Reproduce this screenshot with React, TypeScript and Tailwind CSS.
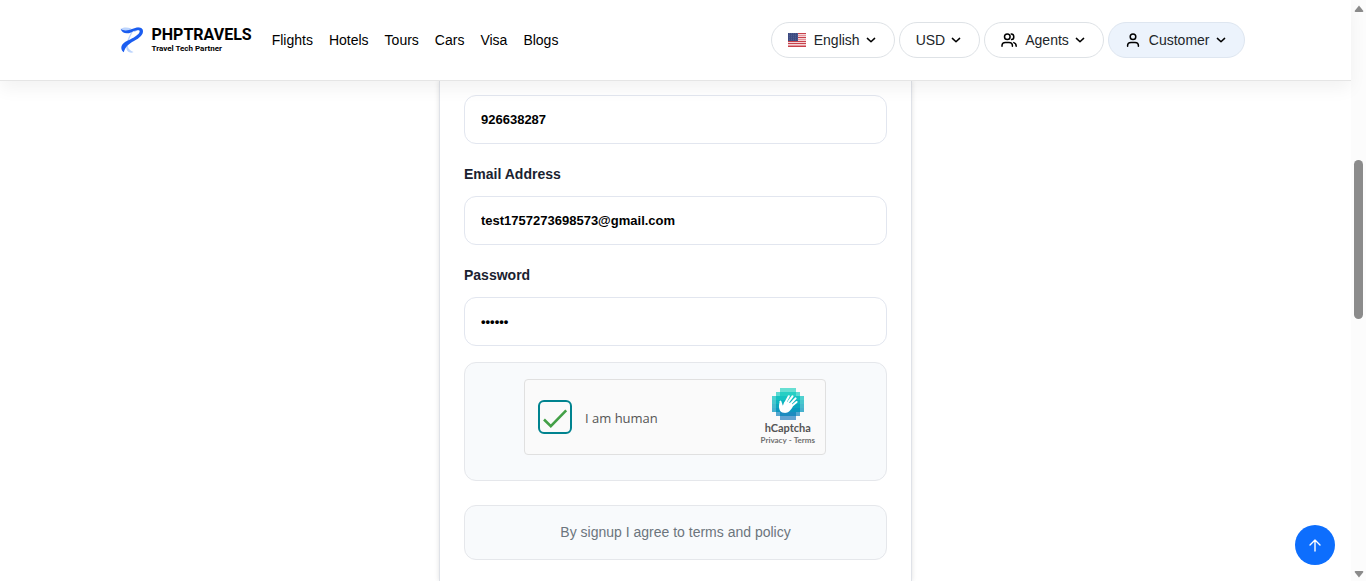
import type { ReactNode } from "react";

const LINKS = ["Flights", "Hotels", "Tours", "Cars", "Visa", "Blogs"];

function Chevron() {
  return (
    <svg width="10" height="10" viewBox="0 0 10 10" fill="none" stroke="#000" strokeWidth="1.5" strokeLinecap="round" strokeLinejoin="round" aria-hidden="true">
      <path d="M1.4 3.4 L5 6.7 L8.6 3.4" />
    </svg>
  );
}

function Flag() {
  return (
    <svg width="18" height="14" viewBox="0 0 18 14" className="mr-2" aria-hidden="true">
      <rect width="18" height="14" fill="#f3d3d6" />
      {[0, 4, 8, 10, 13].map((y) => (
        <rect key={y} y={y} width="18" height="1" fill="#c8414b" />
      ))}
      {[2, 6, 12].map((y) => (
        <rect key={y} y={y} width="18" height="1" fill="#e3949a" />
      ))}
      <rect width="10" height="8" fill="#3c4a80" />
      {[1, 3, 5, 7].map((y) =>
        [1, 3, 5, 7, 9].map((x) => <rect key={`${x}-${y}`} x={x} y={y - 0.5} width="0.7" height="0.7" fill="#6f7bab" />)
      )}
    </svg>
  );
}

function UserIcon() {
  return (
    <svg width="16" height="16" viewBox="0 0 16 16" className="mr-2" fill="none" stroke="#000" strokeWidth="1.5" strokeLinecap="round" aria-hidden="true">
      <circle cx="8" cy="4.8" r="2.8" />
      <path d="M2.6 14.2 V13.6 C2.6 11.6 4 10.4 6 10.4 H10 C12 10.4 13.4 11.6 13.4 13.6 V14.2" />
    </svg>
  );
}

function UsersIcon() {
  return (
    <svg width="16" height="16" viewBox="0 0 16 16" className="mr-2" fill="none" stroke="#000" strokeWidth="1.5" strokeLinecap="round" aria-hidden="true">
      <circle cx="6.3" cy="4.8" r="2.8" />
      <path d="M1 14.2 V13.6 C1 11.6 2.4 10.4 4.4 10.4 H8 C10 10.4 11.4 11.6 11.4 13.6 V14.2" />
      <path d="M10.2 2 C13.6 2 13.6 7.4 10.6 7.6" />
      <path d="M12.8 10.6 C14.4 11.2 15.2 12.4 15.2 14.2" />
    </svg>
  );
}

function Logo() {
  return (
    <a href="#" className="flex items-center gap-2 text-black">
      <svg width="24" height="28" viewBox="0 0 24 28" fill="none" aria-hidden="true">
        <path d="M1 2.6 C4 0.8 8 1.2 11.5 2.6 L9 4.8 C6 5.2 3 4.6 1 2.6Z" fill="#bcd4fd" />
        <path d="M14.5 3 C12.2 6.5 9.6 11.5 8.2 16.5 C7 21 8.4 24 13.6 26 C12.4 26.8 9.6 27 8 25.6 C5.6 23.4 6 18.6 7.4 14.6 C8.8 10.4 11 6 13 3.2Z" fill="#bcd4fd" />
        <path d="M15 3.4 C18 0.4 22.4 1.4 23 4.6 C20.4 2.8 17.4 4.4 14 6Z" fill="#8fb5fb" />
        <path d="M0.6 2.8 C4 5.4 8.4 4.6 12 3 C16.5 0.9 21.5 0.6 22.8 4 C24 8.4 19.6 12 14 15 C8.6 18 5.4 20.6 3.8 26.2 C1.2 24.6 0.6 21.4 2.2 18.8 C4.2 15.8 9 14.2 13.4 11.8 C17.6 9.4 20.6 6.4 19.4 4.6 C18 3.2 14.6 4.8 11 6.4 C7 8.2 1.8 7.6 0.6 2.8Z" fill="#1b5df0" />
      </svg>
      <span className="flex flex-col font-['Roboto',sans-serif] font-bold">
        <span className="text-base leading-[18px]">PHPTRAVELS</span>
        <span className="text-[8px] leading-[10px]">Travel Tech Partner</span>
      </span>
    </a>
  );
}

function Pill({ children, label, active }: { children?: ReactNode; label: string; active?: boolean }) {
  return (
    <button
      type="button"
      className={
        active
          ? "flex h-9 items-center rounded-full border border-[#dee6f0] bg-[#ecf3fc] px-4 text-[#212529]"
          : "flex h-9 items-center rounded-full border border-[#dee2e6] bg-white px-4 text-[#212529]"
      }
    >
      {children}
      <span className="mr-1.5">{label}</span>
      <Chevron />
      <span className="w-0.5" />
    </button>
  );
}

const inputClass =
  "block h-[49px] w-full rounded-xl border border-[#e2e6ef] bg-white px-4 text-[13px] font-bold text-black outline-none";
const labelClass = "mt-5 mb-3 block text-sm leading-5 font-bold text-[#1a2230]";

const HCAPTCHA_ROWS = [
  { from: 2, to: 5, color: "#35d6c6" },
  { from: 1, to: 6, color: "#26cfc4" },
  { from: 0, to: 7, color: "#16c3c2" },
  { from: 0, to: 7, color: "#0db5bf" },
  { from: 0, to: 7, color: "#0ba6be" },
  { from: 0, to: 7, color: "#0b98bf" },
  { from: 1, to: 6, color: "#1c8bc0" },
  { from: 2, to: 5, color: "#2f86c4" },
];

function HCaptchaLogo() {
  return (
    <svg width="32" height="32" viewBox="0 0 32 32" shapeRendering="auto" aria-hidden="true">
      {HCAPTCHA_ROWS.map((row, y) =>
        Array.from({ length: row.to - row.from + 1 }, (_, i) => {
          const x = row.from + i;
          const edge = x === row.from || x === row.to || y === 0 || y === 7;
          return <rect key={`${x}-${y}`} x={x * 4} y={y * 4} width="4" height="4" fill={row.color} opacity={edge ? 0.75 : 1} />;
        })
      )}
      <g stroke="#fff" strokeLinecap="round" strokeWidth="2" fill="none">
        <path d="M12.6 16 L16.8 8.2" />
        <path d="M14.5 16.5 L20.6 8.2" />
        <path d="M17 17.5 L23.6 10.4" />
        <path d="M18 19.5 L24.6 14" />
        <path d="M10.4 19.5 L8.4 13.6" />
      </g>
      <path d="M7.5 14.4 L10.6 18 L13 13.6 L20 15.4 L20.6 19 C18.6 22.6 15.8 25.4 11.8 24.8 C7.2 24 6.2 19.6 7.5 14.4Z" fill="#fff" />
    </svg>
  );
}

function HCaptcha() {
  return (
    <div className="flex w-[302px] items-center rounded border border-[#e0e0e0] bg-[#fafafa] pl-[13px]">
      <span className="relative h-[34px] w-[34px]">
        <input
          id="human"
          type="checkbox"
          defaultChecked
          className="block h-[34px] w-[34px] appearance-none rounded-md border-2 border-[#00838f] bg-[#fafafa]"
        />
        <svg width="34" height="34" viewBox="0 0 34 34" fill="none" stroke="#43a047" strokeWidth="2.6" className="pointer-events-none absolute top-0 left-0" aria-hidden="true">
          <path d="M6 19.5 L12.8 26.2 L28.2 10.4" />
        </svg>
      </span>
      <label htmlFor="human" className="ml-[13px] pt-0.5 font-['Open_Sans',sans-serif] text-[13px] text-[#555]">
        I am human
      </label>
      <div className="mr-[10px] ml-auto flex h-[74px] flex-col items-center pt-2 font-['Lato',sans-serif] text-[#555]">
        <HCaptchaLogo />
        <a href="#" className="mt-0.5 text-[11px] leading-3 font-bold">hCaptcha</a>
        <span className="flex gap-0.5 text-[8px] leading-3 font-bold text-[#707070]">
          <a href="#">Privacy</a>
          <span>-</span>
          <a href="#">Terms</a>
        </span>
      </div>
    </div>
  );
}

function Scrollbar() {
  return (
    <div className="flex w-[15px] shrink-0 flex-col items-center bg-[#fcfcfc] text-[#8b8b8b]" aria-hidden="true">
      <svg width="10" height="8" viewBox="0 0 10 8" className="mt-[5px]">
        <path d="M5 0.4 L9.4 6 Q9.4 7 8.4 7 H1.6 Q0.6 7 0.6 6Z" fill="currentColor" />
      </svg>
      <div className="mt-[147px] h-[159px] w-[9px] rounded-full bg-[#8b8b8b]" />
      <svg width="10" height="8" viewBox="0 0 10 8" className="mt-auto mb-[3px]">
        <path d="M5 7.6 L9.4 2 Q9.4 1 8.4 1 H1.6 Q0.6 1 0.6 2Z" fill="currentColor" />
      </svg>
    </div>
  );
}

export default function App() {
  return (
    <div className="flex min-h-screen bg-white font-['Liberation_Sans',Arial,sans-serif] text-sm">
      <div className="flex min-w-0 grow flex-col">
        <header className="z-10 border-b border-[#e5e5e5] bg-white shadow-[0_8px_16px_rgba(0,0,0,0.05)]">
          <div className="mx-auto flex h-20 max-w-[1140px] items-center pr-px pl-[14px]">
            <Logo />
            <nav className="ml-5 flex gap-4 text-black">
              {LINKS.map((link) => (
                <a key={link} href="#">{link}</a>
              ))}
            </nav>
            <div className="ml-auto flex gap-1">
              <Pill label="English"><Flag /></Pill>
              <Pill label="USD" />
              <Pill label="Agents"><UsersIcon /></Pill>
              <Pill label="Customer" active><UserIcon /></Pill>
            </div>
          </div>
        </header>
        <main className="flex grow justify-center">
          <form className="w-[473px] border-x border-[#dfe2e8] px-6 pt-[14px] shadow-[0_0_5px_rgba(0,0,0,0.12)]">
            <input type="text" aria-label="Phone" defaultValue="926638287" className={inputClass} />
            <label htmlFor="email" className={labelClass}>Email Address</label>
            <input id="email" type="email" defaultValue="test1757273698573@gmail.com" className={inputClass} />
            <label htmlFor="password" className={labelClass}>Password</label>
            <input id="password" type="password" defaultValue="secret" className={inputClass} />
            <div className="mt-4 flex justify-center rounded-xl border border-[#e5e7eb] bg-[#f8fafc] pt-4 pr-px pb-[25px]">
              <HCaptcha />
            </div>
            <p className="mt-6 rounded-xl border border-[#e5e7eb] bg-[#f8fafc] py-4 text-center leading-[21px] text-[#6c757d]">
              By signup I agree to terms and policy
            </p>
          </form>
        </main>
      </div>
      <Scrollbar />
      <button type="button" aria-label="Back to top" className="fixed right-[31px] bottom-4 z-20 flex h-10 w-10 items-center justify-center rounded-full bg-[#0d6efd]">
        <svg width="14" height="14" viewBox="0 0 14 14" fill="none" stroke="#fff" strokeWidth="1.4" strokeLinecap="round" strokeLinejoin="round" aria-hidden="true">
          <path d="M7 13 V2 M2 7 L7 2 L12 7" />
        </svg>
      </button>
    </div>
  );
}
